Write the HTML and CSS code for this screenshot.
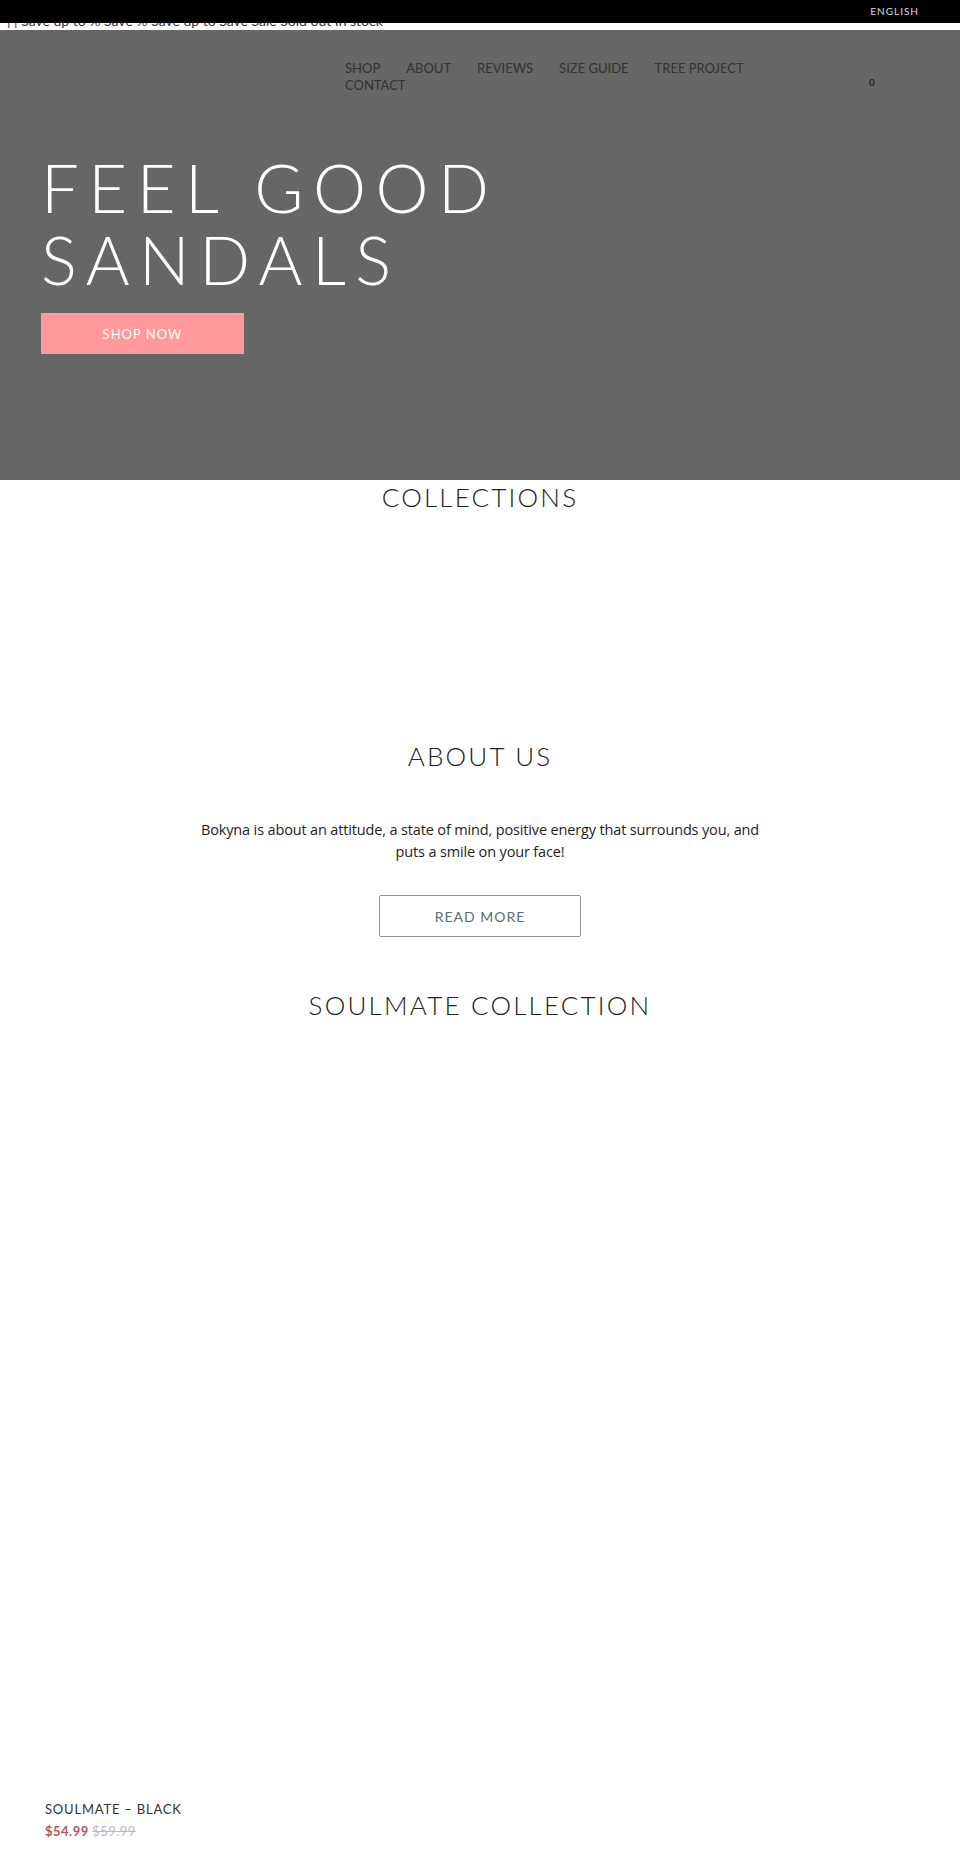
FILE: index.html
```html
<!DOCTYPE html>
<html lang="en">
<head>
<meta charset="utf-8">
<title>Bokyna – Feel Good Sandals</title>
<link rel="stylesheet" href="styles.css">
</head>
<body>
  <div class="topbar">
    <span class="lang">ENGLISH</span>
  </div>
  <div class="notice">
    <p class="notice-text">| | Save up to % Save % Save up to Save Sale Sold out In stock</p>
  </div>

  <section class="hero">
    <header class="site-header">
      <div class="brand"></div>
      <nav class="main-nav">
        <a href="#">SHOP</a>
        <a href="#">ABOUT</a>
        <a href="#">REVIEWS</a>
        <a href="#">SIZE GUIDE</a>
        <a href="#">TREE PROJECT</a>
        <a href="#">CONTACT</a>
      </nav>
      <a class="cart" href="#">0</a>
    </header>
    <h1 class="hero-title">FEEL GOOD<br>SANDALS</h1>
    <a class="btn-pink" href="#">SHOP NOW</a>
  </section>

  <section class="collections">
    <h2 class="section-title">COLLECTIONS</h2>
    <div class="collection-grid"></div>
  </section>

  <section class="about">
    <h2 class="section-title">ABOUT US</h2>
    <p class="about-text">Bokyna is about an attitude, a state of mind, positive energy that surrounds you, and puts a smile on your face!</p>
    <a class="btn-outline" href="#">READ MORE</a>
  </section>

  <section class="featured">
    <h2 class="section-title">SOULMATE COLLECTION</h2>
    <div class="product-grid">
      <div class="product-card">
        <div class="product-media"></div>
        <div class="product-name">SOULMATE – BLACK</div>
        <div class="product-price"><span class="price-sale">$54.99</span> <s class="price-was">$59.99</s></div>
      </div>
    </div>
  </section>
</body>
</html>
```
FILE: styles.css
```css
* { box-sizing: border-box; }

body {
  margin: 0;
  font-family: "Lato", "Liberation Sans", sans-serif;
  color: #222;
  background: #fff;
}

a { text-decoration: none; color: inherit; }

/* top utility bar */
.topbar {
  height: 23px;
  background: #000;
  display: flex;
  justify-content: flex-end;
  padding-right: 41px;
}
.lang {
  font-size: 10px;
  line-height: 23px;
  letter-spacing: 1px;
  color: #ddd;
}

/* announcement strip, mostly tucked under the bar */
.notice {
  height: 7px;
  overflow: hidden;
}
.notice-text {
  margin: -10px 0 0 7px;
  font-size: 14px;
  line-height: 16px;
  color: #333;
  white-space: nowrap;
}

/* hero */
.hero {
  background: #666;
  height: 450px;
  padding: 30px 0 0 41px;
}
.site-header {
  display: flex;
  align-items: flex-start;
}
.brand {
  flex: 0 0 304px;
}
.main-nav {
  flex: 0 0 440px;
  display: flex;
  flex-wrap: wrap;
  column-gap: 26px;
}
.main-nav a {
  font-size: 13px;
  line-height: 17px;
  letter-spacing: 0;
  color: #333;
  white-space: nowrap;
}
.cart {
  margin-left: 84px;
  margin-top: 16px;
  font-size: 10px;
  font-weight: 700;
  line-height: 12px;
  color: #222;
}

.hero-title {
  margin: 57px 0 18px;
  font-size: 67px;
  font-weight: 300;
  line-height: 72px;
  letter-spacing: 9.5px;
  color: #fff;
}
.btn-pink {
  display: flex;
  align-items: center;
  justify-content: center;
  width: 203px;
  height: 41px;
  background: #ff999c;
  color: #fff;
  font-size: 13px;
  letter-spacing: 1px;
}

/* section titles */
.section-title {
  margin: 0;
  text-align: center;
  font-size: 26px;
  font-weight: 300;
  line-height: 30px;
  letter-spacing: 2.2px;
  color: #222;
}

.collections {
  padding-top: 2px;
}
.collection-grid {
  height: 229px;
}

.about {
  display: flex;
  flex-direction: column;
  align-items: center;
}
.about-text {
  margin: 48px 0 32px;
  max-width: 580px;
  text-align: center;
  font-family: "Open Sans", "Liberation Sans", sans-serif;
  font-size: 14.5px;
  font-weight: 500;
  line-height: 22px;
  letter-spacing: -0.15px;
  color: #1e1e1e;
}
.btn-outline {
  display: flex;
  align-items: center;
  justify-content: center;
  width: 202px;
  height: 42px;
  border: 1.5px solid #8b9699;
  border-radius: 2px;
  color: #5a6d72;
  font-size: 14px;
  letter-spacing: 1px;
}

.featured {
  padding-top: 53px;
}
.product-grid {
  display: grid;
  grid-template-columns: repeat(4, 1fr);
  padding: 20px 45px 0;
}
.product-card {
  display: flex;
  flex-direction: column;
}
.product-media {
  height: 760px;
}
.product-name {
  font-size: 13px;
  line-height: 18px;
  letter-spacing: 0.8px;
  color: #333;
  white-space: nowrap;
}
.product-price {
  margin-top: 4px;
  font-size: 13px;
  line-height: 18px;
  white-space: nowrap;
}
.price-sale {
  font-weight: 700;
  color: #b5585a;
  letter-spacing: 0.5px;
}
.price-was {
  color: #bbb;
  letter-spacing: 0.5px;
}
```
